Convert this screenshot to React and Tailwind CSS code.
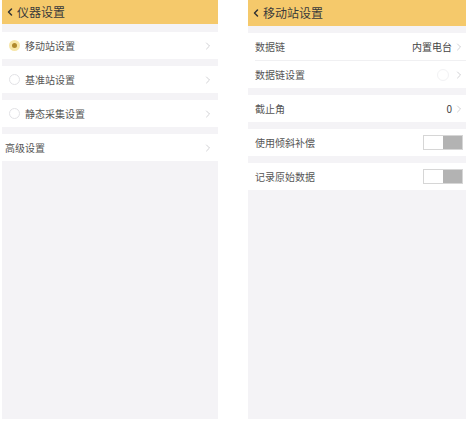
import { ChevronLeft, ChevronRight } from 'lucide-react';

const font = { fontFamily: '"Noto Sans CJK SC", "Noto Sans", sans-serif' };

function Chevron() {
  return <ChevronRight size={12} strokeWidth={1.3} className="text-[#b8b8bc] -mr-[2px]" />;
}

function Radio({ checked }) {
  if (checked) {
    return (
      <span className="w-[11px] h-[11px] rounded-full bg-[#f7e6a8] flex items-center justify-center">
        <span className="w-[5px] h-[5px] rounded-full bg-[#b0892c]" />
      </span>
    );
  }
  return <span className="w-[11px] h-[11px] rounded-full border border-[#e2e2e6] bg-white" />;
}

function Toggle() {
  return (
    <div className="flex w-[40px] h-[15px] border border-[#d6d6d6]">
      <div className="w-1/2 bg-white" />
      <div className="w-1/2 bg-[#b3b3b3]" />
    </div>
  );
}

function Header({ title, h }) {
  return (
    <div className={`${h} bg-[#f5c96b] flex items-center pl-[2px] gap-[1px]`}>
      <ChevronLeft size={12} strokeWidth={3} className="text-[#333]" />
      <span className="text-[12px] text-[#3a3a3a]">{title}</span>
    </div>
  );
}

function LeftRow({ label, radio, checked }) {
  return (
    <div className="h-[27px] bg-white flex items-center pr-[6px]">
      {radio && (
        <div className="w-[23px] flex justify-center pl-[1px]">
          <Radio checked={checked} />
        </div>
      )}
      <span className={`text-[10px] text-[#555] flex-1 ${radio ? '' : 'pl-[3px]'}`}>{label}</span>
      <Chevron />
    </div>
  );
}

function RightRow({ label, children }) {
  return (
    <div className="h-[27px] bg-white flex items-center pl-[7px] pr-[3px]">
      <span className="text-[10px] text-[#555] flex-1">{label}</span>
      {children}
    </div>
  );
}

export default function App() {
  return (
    <div className="w-[468px] h-[421px] bg-white flex gap-[30px] pl-[2px]" style={font}>
      <div className="w-[216px] h-[419px] bg-[#f4f3f6] flex flex-col">
        <Header title="仪器设置" h="h-[24px]" />
        <div className="flex flex-col gap-[7px] pt-[8px]">
          <LeftRow label="移动站设置" radio checked />
          <LeftRow label="基准站设置" radio />
          <LeftRow label="静态采集设置" radio />
          <LeftRow label="高级设置" />
        </div>
      </div>
      <div className="w-[218px] h-[419px] bg-[#f4f3f6] flex flex-col">
        <Header title="移动站设置" h="h-[26px]" />
        <div className="flex flex-col gap-[7px] pt-[7px]">
          <div className="flex flex-col">
            <RightRow label="数据链">
              <span className="text-[10px] text-[#444] mr-[1px]">内置电台</span>
              <Chevron />
            </RightRow>
            <div className="h-px bg-white flex"><div className="ml-[7px] flex-1 bg-[#f0f0f2]" /></div>
            <RightRow label="数据链设置">
              <span className="w-[12px] h-[12px] rounded-full border border-[#f2f2f4] mr-[4px]" />
              <Chevron />
            </RightRow>
          </div>
          <RightRow label="截止角">
            <span className="text-[10px] text-[#444] mr-[1px]">0</span>
            <Chevron />
          </RightRow>
          <RightRow label="使用倾斜补偿">
            <Toggle />
          </RightRow>
          <RightRow label="记录原始数据">
            <Toggle />
          </RightRow>
        </div>
      </div>
    </div>
  );
}
